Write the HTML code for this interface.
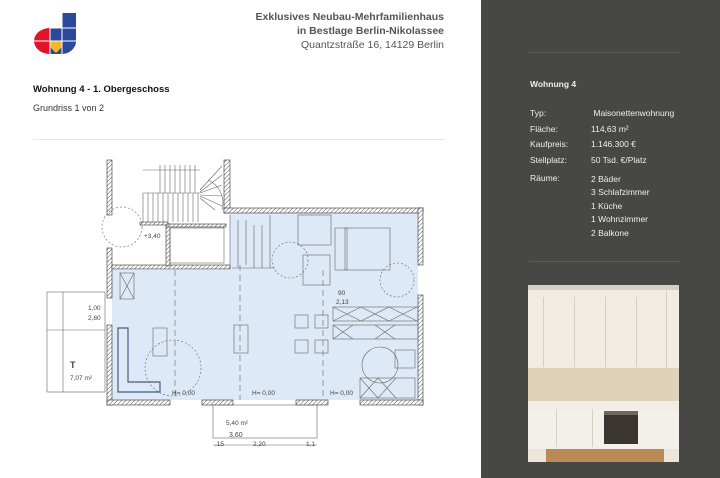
<!DOCTYPE html>
<html><head><meta charset="utf-8"><style>
*{margin:0;padding:0;box-sizing:border-box}
body{width:720px;height:478px;background:#fff;position:relative;overflow:hidden;font-family:"Liberation Sans",sans-serif}
.abs{position:absolute}
.hdr{right:276px;text-align:right;font-size:10.5px;color:#555;line-height:14px}
.side{left:481px;top:0;width:239px;height:478px;background:#474846}
.side .t{color:#eee;font-size:8.5px;position:absolute}
</style></head><body>
<svg class="abs" style="left:32px;top:12px" width="48" height="44" viewBox="0 0 48 44">
<path d="M30 1 H44 V30 A14 13 0 0 1 30 42 H18 V16 H30 Z" fill="#2d4a9a"/>
<path d="M18 16 A16 13 0 0 0 18 42 Z" fill="#e0142b"/>
<path d="M18 29 L30 29 L30 35 L24 41 L18 35Z" fill="#f5b62a"/>
<line x1="2" y1="29" x2="44" y2="29" stroke="#fff" stroke-width="1"/>
<line x1="18" y1="16" x2="44" y2="16" stroke="#fff" stroke-width="1"/>
<line x1="30" y1="1" x2="30" y2="42" stroke="#fff" stroke-width="1"/>
<line x1="18" y1="16" x2="18" y2="42" stroke="#fff" stroke-width="1"/>
</svg>
<div class="abs hdr" style="top:10px;font-weight:bold">Exklusives Neubau-Mehrfamilienhaus</div>
<div class="abs hdr" style="top:24px;font-weight:bold">in Bestlage Berlin-Nikolassee</div>
<div class="abs hdr" style="top:38px">Quantzstraße 16, 14129 Berlin</div>
<div class="abs" style="left:33px;top:84px;font-size:9.5px;font-weight:bold;color:#111">Wohnung 4 - 1. Obergeschoss</div>
<div class="abs" style="left:33px;top:103px;font-size:9px;color:#333">Grundriss 1 von 2</div>
<div class="abs" style="left:33px;top:139px;width:411px;height:1px;background:#e6e6e6"></div>

<svg class="abs" style="left:0;top:0" width="480" height="478" viewBox="0 0 480 478">
<defs><pattern id="h" width="3" height="3" patternUnits="userSpaceOnUse" patternTransform="rotate(45)"><rect width="3" height="3" fill="#fff"/><line x1="0" y1="0" x2="0" y2="3" stroke="#555" stroke-width="1"/></pattern></defs>
<polygon points="112,270 230,270 230,213 418,213 418,400 112,400" fill="#dde9f6"/>
<g fill="url(#h)" stroke="#333" stroke-width="0.6">
<rect x="107" y="160" width="5" height="55"/><rect x="107" y="248" width="5" height="50"/><rect x="107" y="325" width="5" height="80"/>
<rect x="224" y="160" width="6" height="53"/><rect x="224" y="208" width="199" height="5"/>
<rect x="418" y="208" width="5" height="57"/><rect x="418" y="295" width="5" height="110"/>
<rect x="107" y="400" width="63" height="5"/><rect x="202" y="400" width="31" height="5"/><rect x="296" y="400" width="32" height="5"/><rect x="360" y="400" width="63" height="5"/>
<rect x="112" y="265" width="118" height="4"/><rect x="166" y="224" width="4" height="42"/><rect x="166" y="224" width="60" height="3"/>
<rect x="140" y="222" width="28" height="3"/>
</g>
<g stroke="#666" stroke-width="0.6" fill="none">
<rect x="170" y="228" width="54" height="35"/>
<rect x="47" y="292" width="58" height="100"/><line x1="63" y1="292" x2="63" y2="392"/><line x1="47" y1="330" x2="105" y2="330"/>
<rect x="213" y="405" width="104" height="33"/><line x1="213" y1="445" x2="317" y2="445"/>
<path d="M143 170 H200 M143 193 H200 M143 193 V222 M148 193 V222 M153 193 V222 M158 193 V222 M163 193 V222 M168 193 V222 M173 193 V222 M178 193 V222 M183 193 V222 M188 193 V222 M193 193 V222 M198 193 V222 M160 165 V193 M165 165 V193 M170 165 V193 M175 165 V193 M180 165 V193 M185 165 V193 M190 165 V193 M195 165 V193 M200 190 L222 166 M200 192 L222 175 M200 193 L222 185 M200 195 L222 196 M200 196 L222 206 M200 198 L215 210 M208 180 A25 25 0 0 1 222 210"/>
<circle cx="122" cy="227" r="20" stroke-dasharray="2 2"/>
<path d="M230 215 V268 M238 220 V268 M246 220 V265 M254 225 V268 M262 225 V268 M270 215 V268 M232 268 H275"/>
<path d="M118 328 V392 H160 V382 H128 V328 Z" stroke="#4a5a80" stroke-width="1.2"/>
<rect x="153" y="328" width="14" height="28"/><rect x="234" y="325" width="14" height="28"/>
<circle cx="173" cy="368" r="28" stroke-dasharray="2 2"/><circle cx="290" cy="260" r="18" stroke-dasharray="2 2"/>
<rect x="298" y="215" width="33" height="30"/><rect x="303" y="255" width="27" height="30"/>
<rect x="345" y="228" width="45" height="42"/><rect x="335" y="228" width="12" height="42"/>
<circle cx="397" cy="280" r="17" stroke-dasharray="2 2"/><circle cx="380" cy="365" r="18"/>
<rect x="333" y="307" width="85" height="14"/><rect x="333" y="325" width="85" height="14"/><rect x="395" y="350" width="20" height="18"/><rect x="360" y="378" width="55" height="20"/>
<path d="M333 307 l28 14 m0 -14 l-28 14 M361 307 l28 14 m0 -14 l-28 14 M389 307 l28 14 m0 -14 l-28 14 M333 325 l20 14 m0 -14 l-20 14 M375 325 l20 14 m0 -14 l-20 14 M360 378 l18 20 m0 -20 l-18 20 M378 378 l18 20 m0 -20 l-18 20"/>
<rect x="295" y="315" width="13" height="13"/><rect x="315" y="315" width="13" height="13"/><rect x="295" y="340" width="13" height="13"/><rect x="315" y="340" width="13" height="13"/>
<rect x="120" y="273" width="14" height="26"/><path d="M120 273 l14 26 m0 -26 l-14 26"/>
<path d="M240 265 V400 M175 270 V400 M323 270 V400" stroke-dasharray="6 4"/>
</g>
<g font-size="6.5" fill="#444" font-family="Liberation Sans">
<text x="88" y="310">1,00</text><text x="88" y="320">2,80</text><text x="70" y="368" font-size="9" font-weight="bold">T</text><text x="70" y="380">7,07 m²</text>
<text x="226" y="425">5,40 m²</text><text x="229" y="437" font-size="7">3,60</text><text x="215" y="446">,15</text><text x="253" y="446">2,20</text><text x="306" y="446">1,1</text>
<text x="172" y="395">H= 0,00</text><text x="252" y="395">H= 0,00</text><text x="330" y="395">H= 0,00</text>
<text x="338" y="295">90</text><text x="336" y="304">2,13</text><text x="144" y="238">+3,40</text>
</g>
</svg>

<div class="abs side">
<div class="abs" style="left:48px;top:52px;width:151px;height:1px;background:#5a5b59"></div>
<div class="t" style="left:49px;top:79px;font-weight:bold">Wohnung 4</div>
<div class="t" style="left:49px;top:106px;line-height:15.5px">Typ:<br>Fläche:<br>Kaufpreis:<br>Stellplatz:</div>
<div class="t" style="left:110px;top:106px;line-height:15.5px">&nbsp;Maisonettenwohnung<br>114,63 m²<br>1.146.300 €<br>50 Tsd. €/Platz</div>
<div class="t" style="left:49px;top:173px">Räume:</div>
<div class="t" style="left:110px;top:173px;line-height:13.4px">2 Bäder<br>3 Schlafzimmer<br>1 Küche<br>1 Wohnzimmer<br>2 Balkone</div>
<div class="abs" style="left:48px;top:261px;width:151px;height:1px;background:#5a5b59"></div>
<div class="abs" style="left:47px;top:285px;width:151px;height:177px;background:#ece6da;overflow:hidden">
<div class="abs" style="left:0;top:0;width:151px;height:5px;background:#d8d0c0"></div>
<div class="abs" style="left:0;top:5px;width:151px;height:78px;background:#f0ece4"></div>
<div class="abs" style="left:15px;top:12px;width:1px;height:70px;background:#d6cfc2"></div>
<div class="abs" style="left:46px;top:12px;width:1px;height:70px;background:#d6cfc2"></div>
<div class="abs" style="left:77px;top:12px;width:1px;height:70px;background:#d6cfc2"></div>
<div class="abs" style="left:108px;top:12px;width:1px;height:70px;background:#d6cfc2"></div>
<div class="abs" style="left:138px;top:5px;width:1px;height:78px;background:#d6cfc2"></div>
<div class="abs" style="left:0;top:83px;width:151px;height:33px;background:#e0d2b8"></div>
<div class="abs" style="left:0;top:116px;width:151px;height:8px;background:#f1ede6"></div>
<div class="abs" style="left:0;top:124px;width:151px;height:40px;background:#f3f0ea"></div>
<div class="abs" style="left:76px;top:126px;width:34px;height:33px;background:#3a3530;border-top:4px solid #6d6760"></div>
<div class="abs" style="left:28px;top:124px;width:1px;height:38px;background:#d6cfc2"></div>
<div class="abs" style="left:64px;top:124px;width:1px;height:38px;background:#d6cfc2"></div>
<div class="abs" style="left:18px;top:164px;width:118px;height:13px;background:#b98a56"></div>
</div>
</div>
</body></html>
